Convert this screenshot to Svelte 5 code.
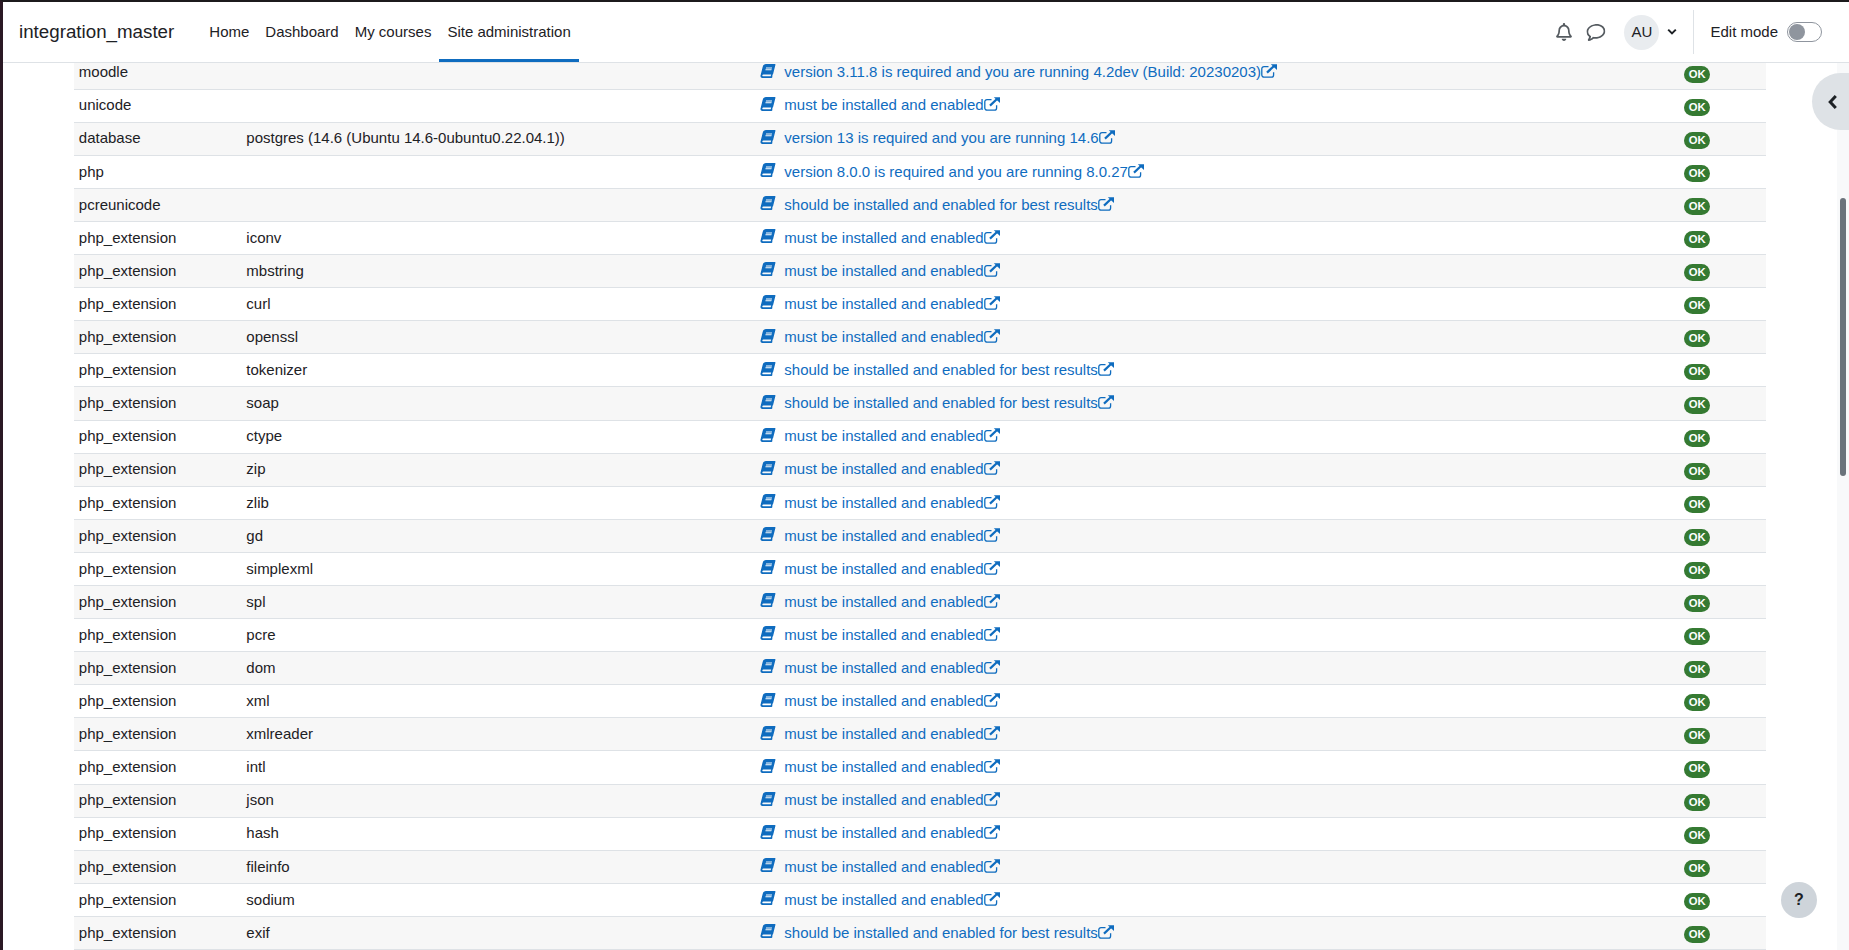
<script lang="ts">
const must = 'must be installed and enabled'
const should = 'should be installed and enabled for best results'

const rows = [
  { name: 'moodle', info: '', report: 'version 3.11.8 is required and you are running 4.2dev (Build: 20230203)' },
  { name: 'unicode', info: '', report: must },
  { name: 'database', info: 'postgres (14.6 (Ubuntu 14.6-0ubuntu0.22.04.1))', report: 'version 13 is required and you are running 14.6' },
  { name: 'php', info: '', report: 'version 8.0.0 is required and you are running 8.0.27' },
  { name: 'pcreunicode', info: '', report: should },
  { name: 'php_extension', info: 'iconv', report: must },
  { name: 'php_extension', info: 'mbstring', report: must },
  { name: 'php_extension', info: 'curl', report: must },
  { name: 'php_extension', info: 'openssl', report: must },
  { name: 'php_extension', info: 'tokenizer', report: should },
  { name: 'php_extension', info: 'soap', report: should },
  { name: 'php_extension', info: 'ctype', report: must },
  { name: 'php_extension', info: 'zip', report: must },
  { name: 'php_extension', info: 'zlib', report: must },
  { name: 'php_extension', info: 'gd', report: must },
  { name: 'php_extension', info: 'simplexml', report: must },
  { name: 'php_extension', info: 'spl', report: must },
  { name: 'php_extension', info: 'pcre', report: must },
  { name: 'php_extension', info: 'dom', report: must },
  { name: 'php_extension', info: 'xml', report: must },
  { name: 'php_extension', info: 'xmlreader', report: must },
  { name: 'php_extension', info: 'intl', report: must },
  { name: 'php_extension', info: 'json', report: must },
  { name: 'php_extension', info: 'hash', report: must },
  { name: 'php_extension', info: 'fileinfo', report: must },
  { name: 'php_extension', info: 'sodium', report: must },
  { name: 'php_extension', info: 'exif', report: should },
]

const navItems = ['Home', 'Dashboard', 'My courses', 'Site administration']
</script>

<div class="window">
  <header class="navbar">
    <span class="brand">integration_master</span>
    <nav class="primary">
      {#each navItems as item, i}
        <span class="nav-item" class:active={i === 3}>{item}</span>
      {/each}
    </nav>
    <div class="usernav">
      <svg class="bell" viewBox="0 0 448 512" aria-hidden="true"><path d="M439.39 362.29c-19.32-20.76-55.47-51.99-55.47-154.29 0-77.7-54.48-139.9-127.94-155.16V32c0-17.67-14.32-32-31.98-32s-31.98 14.33-31.98 32v20.84C118.56 68.1 64.08 130.3 64.08 208c0 102.3-36.15 133.53-55.47 154.29-6 6.45-8.66 14.16-8.61 21.71.11 16.4 12.98 32 32.1 32h383.8c19.12 0 32-15.6 32.1-32 .05-7.55-2.61-15.27-8.61-21.71zM67.53 368c21.22-27.97 44.42-74.33 44.53-159.42 0-.2-.06-.38-.06-.58 0-61.86 50.14-112 112-112s112 50.14 112 112c0 .2-.06.38-.06.58.11 85.1 23.31 131.46 44.53 159.42H67.53zM224 512c35.32 0 63.97-28.65 63.97-64H160.03c0 35.35 28.65 64 63.97 64z"/></svg>
      <svg class="comment" viewBox="0 0 512 512" aria-hidden="true"><path d="M256 32C114.6 32 0 125.1 0 240c0 47.6 19.9 91.2 52.9 126.3C38 405.7 7 439.1 6.5 439.5c-6.6 7-8.4 17.2-4.6 26S14.4 480 24 480c61.5 0 110-25.7 139.1-46.3C192 442.8 223.2 448 256 448c141.4 0 256-93.1 256-208S397.4 32 256 32zm0 368c-26.7 0-53.1-4.1-78.4-12.1l-22.7-7.2-19.5 13.8c-14.3 10.1-33.9 21.4-57.5 29 7.3-12.1 14.4-25.7 19.9-40.2l10.6-28.1-20.6-21.8C69.7 314.1 48 282.2 48 240c0-88.2 93.3-160 208-160s208 71.8 208 160-93.3 160-208 160z"/></svg>
      <span class="avatar">AU</span>
      <svg class="caret" viewBox="0 0 10 8" aria-hidden="true"><path d="M1.2 1.6 5 5.4l3.8-3.8" /></svg>
      <span class="divider"></span>
      <span class="edit-label">Edit mode</span>
      <span class="toggle"><span class="knob"></span></span>
    </div>
  </header>

  <div class="page">
    <main class="content">
      <table>
        <colgroup>
          <col class="c-name" />
          <col class="c-info" />
          <col class="c-report" />
          <col class="c-status" />
        </colgroup>
        <tbody>
          {#each rows as row}
            <tr>
              <td>{row.name}</td>
              <td>{row.info}</td>
              <td>
                <a href="#top" class="doc-link">
                  <svg class="book" viewBox="0 0 448 512" aria-hidden="true"><path d="M448 360V24c0-13.3-10.7-24-24-24H96C43 0 0 43 0 96v320c0 53 43 96 96 96h328c13.3 0 24-10.7 24-24v-16c0-7.5-3.5-14.3-8.9-18.7-4.2-15.4-4.2-59.3 0-74.7 5.4-4.3 8.9-11.1 8.9-18.6zM128 134c0-3.3 2.7-6 6-6h212c3.3 0 6 2.7 6 6v20c0 3.3-2.7 6-6 6H134c-3.3 0-6-2.7-6-6v-20zm0 64c0-3.3 2.7-6 6-6h212c3.3 0 6 2.7 6 6v20c0 3.3-2.7 6-6 6H134c-3.3 0-6-2.7-6-6v-20zm253.4 250H96c-17.7 0-32-14.3-32-32 0-17.6 14.4-32 32-32h285.4c-1.9 17.1-1.9 46.9 0 64z"/></svg>{row.report}<svg class="external" viewBox="0 0 16 14" aria-hidden="true"><path class="box" d="M7.5 2.6H3A2.2 2.2 0 0 0 .8 4.8v6.2A2.2 2.2 0 0 0 3 13.2h7.4a2.2 2.2 0 0 0 2.2-2.2V8.2"/><path class="shaft" d="M6 8.6 13 2"/><path class="head" d="M9.8.2H16v5.9z"/></svg>
                </a>
              </td>
              <td><span class="badge">OK</span></td>
            </tr>
          {/each}
        </tbody>
      </table>
    </main>
    <div class="scrollbar"><div class="thumb"></div></div>
  </div>

  <button class="drawer-toggle" aria-label="Open block drawer">
    <svg viewBox="0 0 10 16" aria-hidden="true"><path d="M7.8 2 2.2 8l5.6 6" /></svg>
  </button>
  <button class="help" aria-label="Help">?</button>
</div>

<style>
  :global(body) {
    margin: 0;
    background: #fff;
  }

  .window {
    position: relative;
    height: 950px;
    overflow: hidden;
    box-sizing: border-box;
    border-top: 2px solid #1c1a1c;
    border-left: 3px solid #2a1824;
    font-family: "Liberation Sans", Arial, sans-serif;
    font-size: 15px;
    line-height: 1.5;
    color: #1d2125;
  }

  .navbar {
    position: absolute;
    top: 0;
    left: 0;
    right: 0;
    z-index: 2;
    height: 60px;
    display: flex;
    align-items: center;
    box-sizing: content-box;
    padding-left: 16px;
    background: #fff;
    border-bottom: 1px solid #dee2e6;
  }

  .brand {
    font-size: 18.75px;
    margin-right: 27px;
  }

  .primary {
    display: flex;
    align-self: stretch;
  }

  .nav-item {
    display: flex;
    align-items: center;
    padding: 3px 8px 0;
    border-bottom: 3px solid transparent;
  }

  .nav-item.active {
    border-bottom-color: #0f6cbf;
  }

  .usernav {
    margin-left: auto;
    display: flex;
    align-items: center;
    padding-right: 27px;
  }

  .bell {
    width: 16px;
    height: 18px;
    fill: #555b60;
  }

  .comment {
    width: 18px;
    height: 18px;
    margin-left: 15px;
    fill: #555b60;
    transform: scaleX(1.05) rotate(-8deg);
  }

  .avatar {
    width: 35px;
    height: 35px;
    margin-left: 19px;
    border-radius: 50%;
    background: #e9ecef;
    display: flex;
    align-items: center;
    justify-content: center;
  }

  .caret {
    width: 10px;
    height: 8px;
    margin-left: 8px;
    fill: none;
    stroke: #1d2125;
    stroke-width: 2;
  }

  .divider {
    width: 1px;
    height: 44px;
    margin-left: 16px;
    background: #dee2e6;
  }

  .edit-label {
    margin-left: 16px;
  }

  .toggle {
    width: 35px;
    height: 20px;
    margin-left: 9px;
    box-sizing: border-box;
    border: 1px solid #8f959e;
    border-radius: 10px;
    display: flex;
    align-items: center;
    padding-left: 1px;
  }

  .knob {
    width: 16px;
    height: 16px;
    border-radius: 50%;
    background: #8f959e;
  }

  .page {
    display: flex;
    height: 948px;
  }

  .content {
    flex: 1;
    min-width: 0;
    padding: 54.5px 0 0 71px;
  }

  table {
    table-layout: fixed;
    width: 1692px;
    border-collapse: separate;
    border-spacing: 0;
  }

  .c-name {
    width: 167.5px;
  }

  .c-info {
    width: 515px;
  }

  .c-report {
    width: 923px;
  }

  .c-status {
    width: 86.5px;
  }

  td {
    padding: 4.8px;
    border-bottom: 1px solid #dee2e6;
    vertical-align: top;
    white-space: nowrap;
  }

  tr:nth-child(odd) td {
    background: #f7f7f7;
  }

  .doc-link {
    color: #0f6cbf;
    text-decoration: none;
  }

  .book {
    width: 13.5px;
    height: 14px;
    margin: 0 9.5px 0 0;
    vertical-align: -0.5px;
    fill: #0f6cbf;
    transform: skewX(-14deg);
  }

  .external {
    width: 16px;
    height: 14px;
    vertical-align: -1px;
  }

  .external .box {
    fill: none;
    stroke: #0f6cbf;
    stroke-width: 1.3;
  }

  .external .shaft {
    fill: none;
    stroke: #0f6cbf;
    stroke-width: 2.2;
  }

  .external .head {
    fill: #0f6cbf;
  }

  .badge {
    display: inline-block;
    margin-top: 4.4px;
    padding: 0.25em 0.4em;
    font-size: 11.25px;
    font-weight: 700;
    line-height: 1;
    color: #fff;
    background: #357a32;
    border-radius: 10rem;
    vertical-align: top;
  }

  .scrollbar {
    width: 12px;
    flex: none;
    box-sizing: border-box;
    margin-top: 61px;
    padding: 135px 3px 0;
    background: #f8f9fa;
  }

  .thumb {
    height: 278px;
    border-radius: 3px;
    background: #6a737b;
  }

  .drawer-toggle {
    position: absolute;
    top: 71px;
    right: 0;
    width: 37px;
    height: 57px;
    padding: 0;
    border: 0;
    border-radius: 28.5px 0 0 28.5px;
    background: #dee2e6;
    display: flex;
    align-items: center;
    padding-left: 16px;
    box-sizing: border-box;
  }

  .drawer-toggle svg {
    width: 10px;
    height: 16px;
    fill: none;
    stroke: #1d2125;
    stroke-width: 3;
  }

  .help {
    position: absolute;
    top: 880px;
    left: 1778px;
    width: 36px;
    height: 36px;
    padding: 0;
    border: 0;
    border-radius: 50%;
    background: #ced4da;
    color: #1d2125;
    font-family: "Liberation Sans", Arial, sans-serif;
    font-size: 16px;
    font-weight: 700;
  }
</style>
